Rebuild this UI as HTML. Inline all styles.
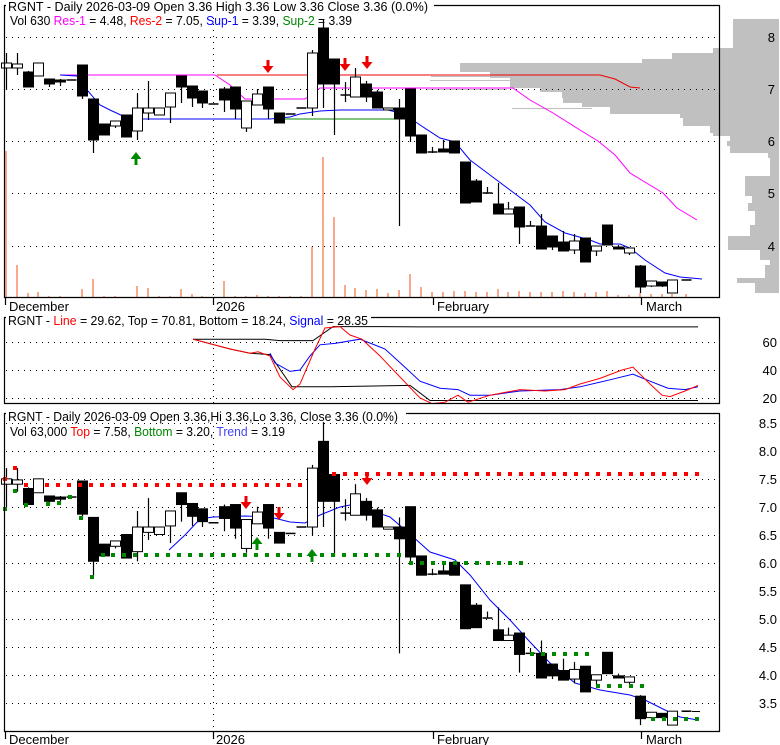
<!DOCTYPE html>
<html><head><meta charset="utf-8"><style>
html,body{margin:0;padding:0;background:#fff;}
svg{display:block;font-family:"Liberation Sans",Arial,sans-serif;}
</style></head><body>
<svg id="s" width="780" height="745" viewBox="0 0 780 745" xmlns="http://www.w3.org/2000/svg">
<rect width="780" height="745" fill="#fff"/>
<g id="prof" fill="#c0c0c0"></g>
<g id="grid" stroke="#000" stroke-dasharray="1,5" stroke-width="1"></g>
<g id="vol" fill="#f9a98a"></g>
<g id="lines" fill="none" stroke-width="1"></g>
<g id="c1"></g>
<g id="c2"></g>
<g id="marks"></g>
<g stroke="#000" fill="none" stroke-width="1.2">
<path d="M4.5,5.5H719.5V297.5H4.5Z"/>
<path d="M4.5,317.5H719.5V403.5H4.5Z"/>
<path d="M4.5,413.5H719.5V731.5H4.5Z"/>
<path d="M5.5,297v8M213.5,297v8M433.5,297v8M641.5,297v8M5.5,731v8M213.5,731v8M433.5,731v8M641.5,731v8"/>
</g>
<g font-size="13" fill="#000">
<rect x="6" y="0" width="428" height="13" fill="#fff"/>
<text x="8" y="11" textLength="420" lengthAdjust="spacingAndGlyphs">RGNT - Daily 2026-03-09 Open 3.36  High 3.36  Low 3.36  Close 3.36 (0.0%)</text>
<text x="10" y="25" textLength="342" lengthAdjust="spacingAndGlyphs">Vol 630 <tspan fill="#f0f">Res-1</tspan> = 4.48, <tspan fill="#f00">Res-2</tspan> = 7.05, <tspan fill="#00f">Sup-1</tspan> = 3.39, <tspan fill="#080">Sup-2</tspan> = 3.39</text>
<rect x="6" y="312" width="365" height="13" fill="#fff"/>
<text x="8" y="325" textLength="360" lengthAdjust="spacingAndGlyphs">RGNT - <tspan fill="#f00">Line</tspan> = 29.62, Top = 70.81, Bottom = 18.24, <tspan fill="#00f">Signal</tspan> = 28.35</text>
<rect x="6" y="408" width="400" height="13" fill="#fff"/>
<text x="8" y="421" textLength="390" lengthAdjust="spacingAndGlyphs">RGNT - Daily 2026-03-09 Open 3.36,Hi 3.36,Lo 3.36, Close 3.36 (0.0%)</text>
<text x="10" y="436" textLength="275" lengthAdjust="spacingAndGlyphs">Vol 63,000 <tspan fill="#f00">Top</tspan> = 7.58, <tspan fill="#080">Bottom</tspan> = 3.20, <tspan fill="#44f">Trend</tspan> = 3.19</text>
<text x="9" y="311">December</text><text x="216" y="311">2026</text><text x="437" y="311">February</text><text x="646" y="311">March</text>
<text x="9" y="744">December</text><text x="216" y="744">2026</text><text x="437" y="744">February</text><text x="646" y="744">March</text>
<g text-anchor="end">
<text x="775" y="42">8</text><text x="775" y="94">7</text><text x="775" y="146">6</text><text x="775" y="198">5</text><text x="775" y="251">4</text>
<text x="777" y="347">60</text><text x="777" y="375">40</text><text x="777" y="403">20</text>
<text x="777" y="428">8.5</text><text x="777" y="456">8.0</text><text x="777" y="484">7.5</text><text x="777" y="512">7.0</text><text x="777" y="540">6.5</text><text x="777" y="568">6.0</text><text x="777" y="596">5.5</text><text x="777" y="624">5.0</text><text x="777" y="652">4.5</text><text x="777" y="680">4.0</text><text x="777" y="708">3.5</text>
</g>
</g>
</svg>
<script>
var NS="http://www.w3.org/2000/svg";
function el(p,t,a){var e=document.createElementNS(NS,t);for(var k in a)e.setAttribute(k,a[k]);document.getElementById(p).appendChild(e);return e;}
var pr=[[19,48,733],[48,53,713],[53,59,672],[59,63,642],[63,72,460],[72,78,490],[78,88,510],[88,92,540],[92,98,562],[98,103,563],[103,107,582],[107,114,610],[114,118,680],[118,126,683],[126,133,710],[133,136,713],[136,141,730],[141,146,727],[146,153,730],[153,158,768],[158,176,770],[176,186,745],[186,196,745],[196,203,752],[203,211,748],[211,225,755],[225,236,750],[236,250,728],[250,260,760],[260,265,770],[265,278,765],[278,283,737],[283,293,755]];
pr.forEach(function(r){el("prof","rect",{x:r[2],y:r[0],width:779-r[2],height:r[1]-r[0]});});
[[80,430],[89,427],[108,512],[76,431]].forEach(function(r){el("prof","rect",{x:r[1],y:r[0],width:80,height:1});});
var g="";[37,89,141,193,246].forEach(function(y){g+="M6,"+(y+.5)+"H719";});
[342,370,398].forEach(function(y){g+="M6,"+(y+.5)+"H719";});
for(var k=0;k<11;k++){var y=423+28*k;g+="M6,"+(y+.5)+"H719";}
g+="M213.5,6V297M213.5,318V403M213.5,414V731";
el("grid","path",{d:g});
var C=[[68,63,53,90],[68,64,53,75],[72,87,71,87],[76,63,63,76],[79,84,79,87],[80,82,79,86],[80,80,80,80],[65,96,65,99],[99,140,99,153],[124,135,124,135],[126,121,121,128],[115,137,115,137],[131,108,93,140],[113,108,81,120],[115,108,108,115],[107,93,93,123],[76,87,76,103],[86,98,86,107],[91,103,91,108],[104,104,104,104],[89,100,87,112],[87,109,87,119],[128,101,101,132],[105,94,89,105],[87,109,87,119],[113,123,113,123],[114,114,114,114],[108,108,108,108],[108,53,50,116],[28,84,20,108],[59,84,59,135],[95,95,82,102],[97,77,68,97],[84,97,81,102],[92,108,90,108],[110,108,108,110],[108,119,99,226],[89,136,89,142],[135,153,135,153],[152,152,147,153],[149,152,140,152],[141,153,141,153],[162,203,162,203],[181,202,179,202],[193,193,187,193],[204,214,183,214],[214,209,202,214],[207,227,207,244],[226,226,221,226],[226,249,214,249],[236,247,236,250],[242,251,231,251],[250,241,234,254],[238,262,238,262],[251,246,246,256],[225,245,225,245],[247,249,245,249],[253,248,248,255],[266,287,265,293],[286,281,281,287],[282,286,282,287],[293,280,280,293],[280,280,280,280]];
function X(i){return i<62?5.7+10.93*i:686;}
function drawC(grp,f,clip){C.forEach(function(c,i){var x=Math.round(X(i))+.5;var o=f(c[0]),cl=f(c[1]),h=f(c[2]),l=f(c[3]);
 if(clip&&h<6)h=6; if(clip&&o<6)o=6;
 var t=Math.min(o,cl),b=Math.max(o,cl);
 el(grp,"path",{d:"M"+x+","+h+"V"+l,stroke:"#000","stroke-width":1.2});
 if(b-t<1.5){el(grp,"path",{d:"M"+(x-5)+","+t+"H"+(x+5),stroke:"#000","stroke-width":1.5});}
 else el(grp,"rect",{x:x-5,y:t,width:10,height:b-t,fill:cl>o?"#000":"#fff",stroke:"#000","stroke-width":1});});}
drawC("c1",function(y){return y;},true);
C[29][2]=10;
drawC("c2",function(y){return 451+(y-37)*1.0707;},false);
var V=[151,265,293,292,296,296,297,289,279,296,296,297,286,288,296,296,289,294,296,297,281,296,296,295,296,296,296,296,247,157,217,285,288,290,289,293,290,274,287,292,292,291,291,292,292,289,292,291,292,292,292,291,292,293,292,291,295,295,293,294,294,294,294];
V.forEach(function(t,i){el("vol","rect",{x:Math.round(X(i))-1,y:t,width:2,height:297-t});});
function pl(pts,c,w){el("lines","polyline",{points:pts.map(function(p){return p.join(",");}).join(" "),stroke:c,"stroke-width":w||1});}
pl([[60,75],[215,75],[230,85],[245,99],[305,99],[320,88],[513,88],[530,100],[553,113],[580,130],[598,141],[615,155],[630,173],[663,193],[677,208],[697,220]],"#f0f");
pl([[217,75],[600,75],[615,79],[630,87],[640,88]],"#e00");
pl([[283,119],[400,119]],"#080");
pl([[60,75],[77,76],[87,90],[100,105],[110,110],[125,117],[135,119],[270,119],[290,117],[300,114],[320,111],[340,110],[388,110],[400,113],[410,118],[420,125],[440,138],[455,142],[470,160],[490,175],[510,190],[530,205],[545,222],[565,233],[590,240],[600,244],[620,244],[630,248],[645,260],[665,273],[680,277],[702,279]],"#00f");
function R(a){return a.map(function(p){return [p[0],426-1.4*p[1]];});}
pl(R([[193,62],[265,62],[280,61],[313,61],[333,71],[370,71],[420,70.8],[698,70.8]]),"#000");
pl(R([[193,62],[230,55],[250,52],[270,51],[292,28],[330,28],[410,29],[430,18.2],[698,18.2]]),"#000");
pl(R([[270,52],[275,45],[290,39],[300,40],[310,50],[320,58],[335,59],[360,62],[385,55],[405,42],[420,32],[440,27],[458,26],[470,22],[490,22],[520,25],[560,26],[580,28],[610,33],[633,37],[650,32],[668,27],[685,26],[698,28]]),"#00f");
pl(R([[193,62],[230,55],[250,52],[258,53],[270,50],[280,35],[293,26],[300,30],[315,55],[325,70],[340,71],[350,65],[362,62],[380,50],[400,35],[420,20],[432,16],[445,17],[458,22],[468,17],[490,22],[520,26],[545,25],[565,26],[580,30],[600,34],[622,40],[633,42],[650,30],[662,22],[670,21],[685,25],[698,29]]),"#f00");
pl([[169,550],[185,535],[200,519],[213,517],[245,516],[270,517],[290,522],[305,523],[320,515],[340,507],[350,505],[370,510],[390,517],[411,535],[430,552],[455,560],[470,575],[490,600],[510,620],[530,642],[550,663],[575,683],[600,690],[630,695],[645,700],[665,710],[680,717],[698,720]],"#00f");
el("lines","path",{d:"M683,711.5h6M692,711.5h8",stroke:"#000"});
function dots(x1,x2,y,c){for(var x=x1;x<=x2;x+=11)el("marks","rect",{x:x-2,y:y-2,width:4,height:4,fill:c});}
dots(47,300,485,"#f00");dots(334,697,474,"#f00");
dots(113,400,555,"#080");dots(411,522,563,"#080");dots(532,588,654,"#080");dots(598,643,686,"#080");dots(653,698,719,"#080");
[[5,479,"#f00"],[5,509,"#080"],[15,468,"#f00"],[15,491,"#080"],[26,485,"#f00"],[26,505,"#080"],[48,504,"#080"],[59,503,"#080"],[70,497,"#080"],[81,518,"#080"],[92,577,"#080"],[103,555,"#080"]].forEach(function(d){el("marks","rect",{x:d[0]-2,y:d[1]-2,width:4,height:4,fill:d[2]});});
function down(x,y){el("marks","path",{d:"M"+(x-1.5)+","+(y-10)+"h3v6h4l-5.5,7l-5.5,-7h4z",fill:"#e00"});}
function up(x,y){el("marks","path",{d:"M"+(x-1.5)+","+(y+10)+"h3v-6h4l-5.5,-7l-5.5,7h4z",fill:"#080"});}
down(268,70);down(345,68);down(367,66);up(136,155);
down(246,506);down(279,517);down(367,482);up(257,540);up(312,552);
</script>
</body></html>
